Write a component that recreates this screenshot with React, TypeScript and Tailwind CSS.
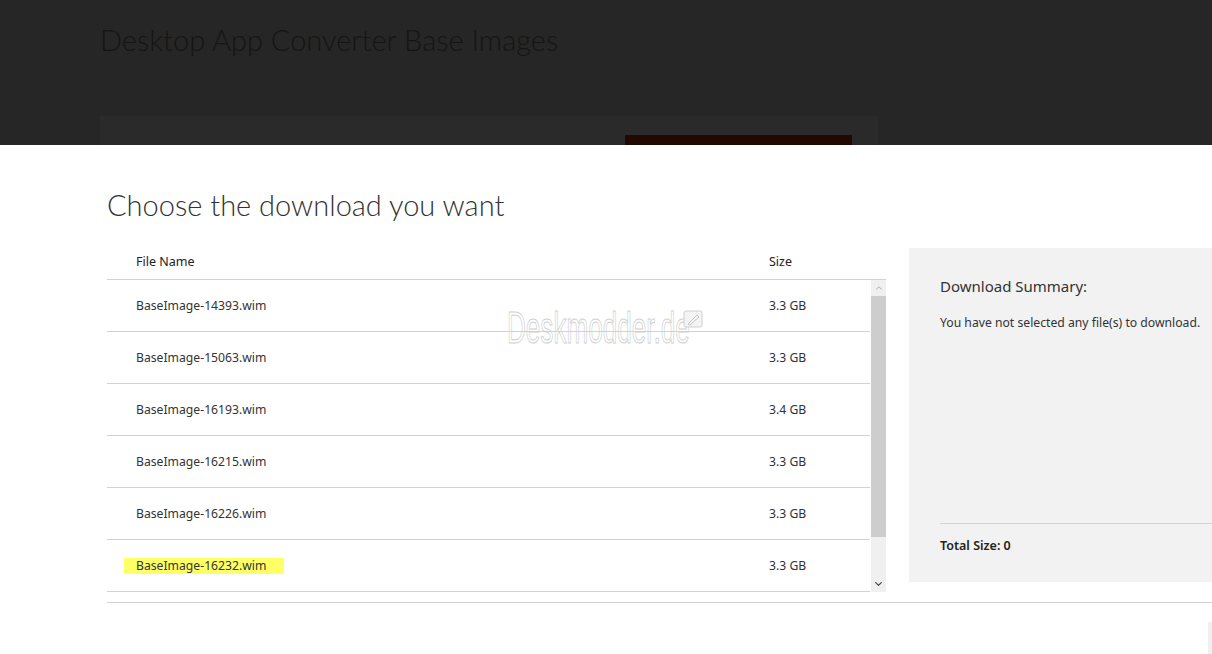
import { ChevronUp, ChevronDown } from "lucide-react";

const files = [
  { name: "BaseImage-14393.wim", size: "3.3 GB" },
  { name: "BaseImage-15063.wim", size: "3.3 GB" },
  { name: "BaseImage-16193.wim", size: "3.4 GB" },
  { name: "BaseImage-16215.wim", size: "3.3 GB" },
  { name: "BaseImage-16226.wim", size: "3.3 GB" },
  { name: "BaseImage-16232.wim", size: "3.3 GB", marked: true },
];

export default function App() {
  return (
    <div className="relative w-[1212px] h-[654px] overflow-hidden bg-white font-['Noto_Sans','Open_Sans',sans-serif] text-[#262626]">
      {/* DIMMED PAGE BEHIND THE DIALOG */}
      <div className="h-[145px] bg-[#262626] overflow-hidden">
        <h1 className="pl-[100px] pt-[20px] text-[29px] leading-[40px] font-light text-[#151515] font-['Lato','Noto_Sans',sans-serif]">
          Desktop App Converter Base Images
        </h1>
        <div className="ml-[100px] mt-[56px] w-[778px] h-[40px] bg-[#2a2a2a] pl-[525px] pt-[19px]">
          <div className="w-[227px] h-[21px] bg-[#220800]" />
        </div>
      </div>

      {/* DIALOG */}
      <div className="pl-[107px]">
        <h2 className="pt-[42px] text-[29px] leading-[36px] font-light text-[#333] font-['Lato','Noto_Sans',sans-serif]">
          Choose the download you want
        </h2>

        <div className="mt-[25px] flex gap-[23px]">
          {/* TABLE */}
          <div className="w-[779px]">
            <div className="flex h-[32px] pt-[5px] items-start border-b border-[#d2d2d2] text-[12.5px] leading-[17px] text-[#222]">
              <span className="pl-[29px] w-[662px]">File Name</span>
              <span>Size</span>
            </div>
            <div className="flex">
              <div className="w-[764px]">
                {files.map((f) => (
                  <div
                    key={f.name}
                    className="flex h-[52px] pt-[2px] items-center border-b border-[#d2d2d2] text-[12.2px] text-[#333]"
                  >
                    <div className="w-[662px] pl-[17px]">
                      <span
                        className={
                          f.marked
                            ? "inline-block bg-[#ffff66] pl-[12px] pr-[18px] leading-[16px]"
                            : "inline-block pl-[12px] leading-[16px]"
                        }
                      >
                        {f.name}
                      </span>
                    </div>
                    <span>{f.size}</span>
                  </div>
                ))}
              </div>
              <div className="w-[15px] ml-px bg-[#f0f0f0] flex flex-col items-center">
                <ChevronUp className="w-[10px] h-[16px] text-[#a0a0a0]" strokeWidth={2} />
                <div className="w-full h-[241px] bg-[#cdcdcd]" />
                <div className="flex-1" />
                <ChevronDown className="w-[11px] h-[16px] text-[#505050]" strokeWidth={3} />
              </div>
            </div>
          </div>

          {/* SUMMARY */}
          <div className="flex-1 h-[334px] bg-[#f2f2f2] pl-[31px] flex flex-col">
            <p className="pt-[27px] text-[15px] leading-[22px] text-[#333]">Download Summary:</p>
            <p className="pt-[18px] text-[12.2px] leading-[16px] text-[#333]">
              You have not selected any file(s) to download.
            </p>
            <div className="flex-1" />
            <div className="border-t border-[#d2d2d2] h-[59px] pt-[13px]">
              <p className="text-[12.5px] leading-[18px] font-semibold text-[#222]">Total Size: 0</p>
            </div>
          </div>
        </div>

        <div className="mt-[10px] border-t border-[#d2d2d2]" />
      </div>

      <div className="absolute right-0 bottom-0 w-[4px] h-[32px] bg-[#f0f0f0]" />

      {/* WATERMARK */}
      <div className="absolute left-[507px] top-[304px] w-[200px] h-[48px] pointer-events-none">
        <span className="inline-block text-[45px] leading-[48px] text-transparent [-webkit-text-stroke:1px_#cfcfcf] font-['Liberation_Sans',sans-serif] scale-x-[0.58] origin-left whitespace-nowrap">
          Deskmodder.de
        </span>
        <svg width="20" height="18" viewBox="0 0 20 18" className="absolute left-[176px] top-[6px]">
          <rect x="1" y="1" width="18" height="16" rx="2" fill="#f4f4f4" stroke="#d0d0d0" />
          <path d="M5 14 L14 5 L16 7 L7 15 Z" fill="none" stroke="#c8c8c8" strokeWidth="1" />
        </svg>
      </div>
    </div>
  );
}
